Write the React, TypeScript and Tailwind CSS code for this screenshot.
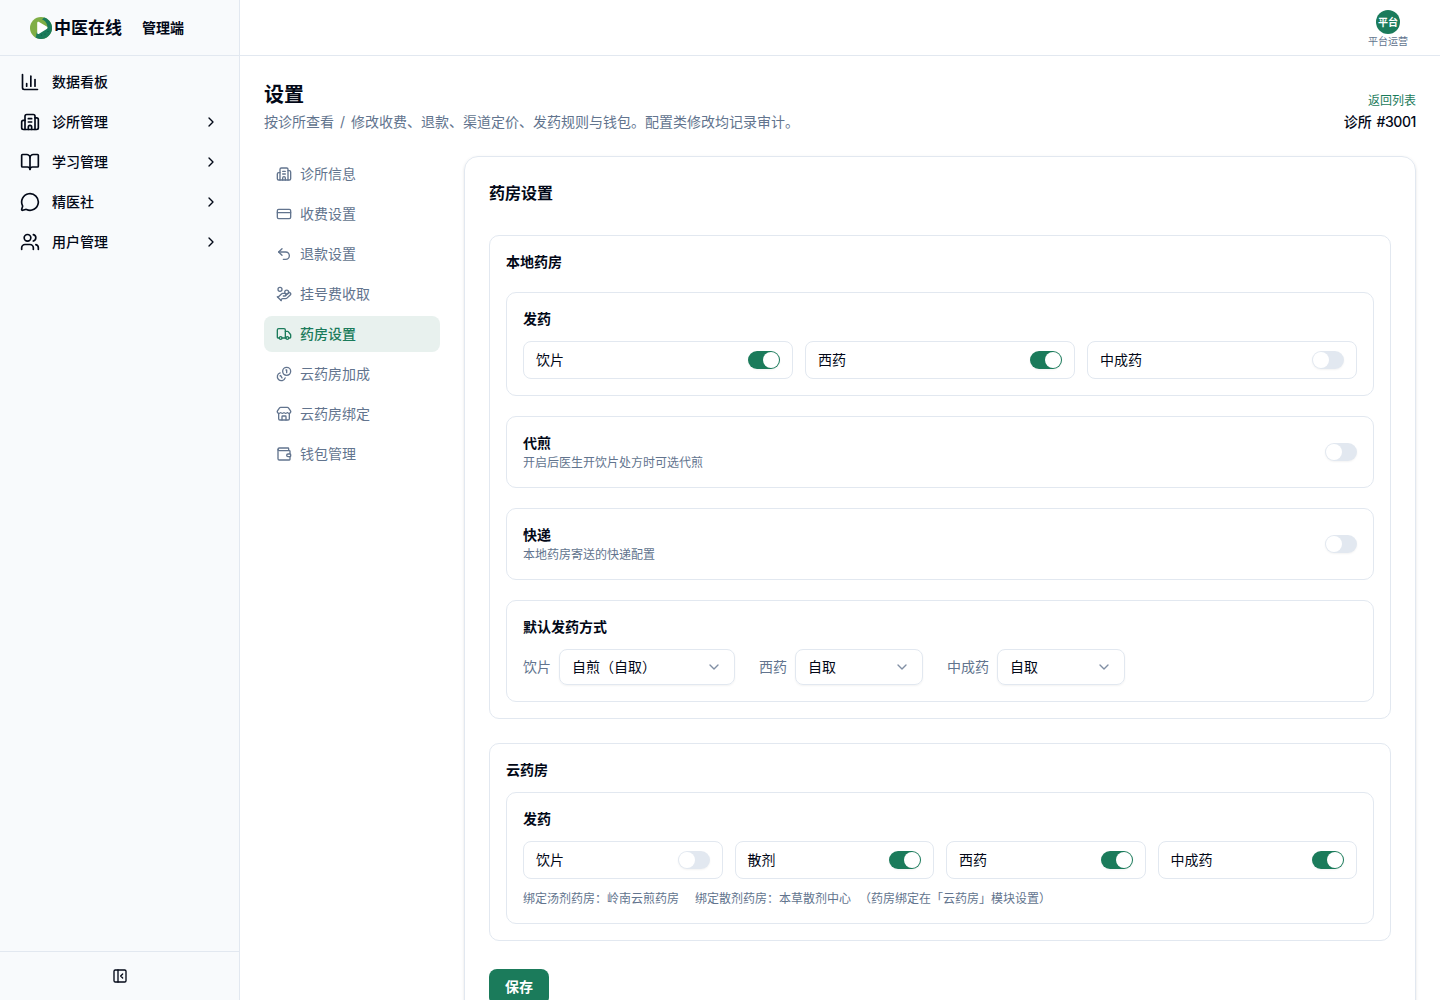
import { useState } from 'react';
import {
  BookOpen,
  Building2,
  ChartColumn,
  ChevronDown,
  ChevronRight,
  CreditCard,
  HandCoins,
  MessageCircle,
  PanelLeftClose,
  Store,
  Truck,
  Undo2,
  Users,
  Wallet,
} from 'lucide-react';
import clsx from 'clsx';

const MENU = [
  { label: '数据看板', icon: ChartColumn, expandable: false },
  { label: '诊所管理', icon: Building2, expandable: true },
  { label: '学习管理', icon: BookOpen, expandable: true },
  { label: '精医社', icon: MessageCircle, expandable: true },
  { label: '用户管理', icon: Users, expandable: true },
];

const TABS = [
  { label: '诊所信息', icon: Building2 },
  { label: '收费设置', icon: CreditCard },
  { label: '退款设置', icon: Undo2 },
  { label: '挂号费收取', icon: HandCoins },
  { label: '药房设置', icon: Truck },
  { label: '云药房加成', icon: CoinsIcon },
  { label: '云药房绑定', icon: Store },
  { label: '钱包管理', icon: Wallet },
];

// 双硬币图标，大硬币在右上
function CoinsIcon({ className }: { className?: string }) {
  return (
    <svg
      className={className}
      viewBox="0 0 24 24"
      fill="none"
      stroke="currentColor"
      strokeWidth="2"
      strokeLinecap="round"
      strokeLinejoin="round"
      aria-hidden="true"
    >
      <path d="M13.744 17.736a6 6 0 1 1-7.48-7.48" />
      <path d="M15 6h1v4" />
      <path d="m6.134 14.768.866-.5 2 3.464" />
      <circle cx="16" cy="8" r="6" />
    </svg>
  );
}

function Logo() {
  return (
    <div className="flex items-center gap-[3px]">
      <svg width="22" height="22" viewBox="0 0 22 22" aria-hidden="true">
        <circle cx="11" cy="11" r="11" fill="#7fae45" />
        <path d="M14 .4A11 11 0 1 1 5.500 20.500C6.500 19.500 6 17 7 15L17.500 11C17.500 7 15.500 3.500 12 2.500Z" fill="#1b7b5b" />
        <path d="M7.200 6c0-1 1-1.600 1.900-1.100l7.600 4.600c1 .6 1 1.900 0 2.500l-7.600 4.800c-.9.500-1.900-.1-1.900-1.100z" fill="#fff" />
        <circle cx="11.500" cy="18" r=".6" fill="#0d5a40" />
        <circle cx="15" cy="17" r=".6" fill="#0d5a40" />
        <circle cx="18" cy="14.500" r=".6" fill="#0d5a40" />
      </svg>
      <span className="-ml-px text-[17px] leading-6 font-semibold">中医在线</span>
    </div>
  );
}

function Switch({ defaultOn = false }: { defaultOn?: boolean }) {
  const [on, setOn] = useState(defaultOn);

  return (
    <button
      type="button"
      role="switch"
      aria-checked={on}
      onClick={() => setOn(!on)}
      className={clsx(
        'inline-flex h-[18.4px] w-8 shrink-0 items-center rounded-full border border-transparent shadow-xs',
        on ? 'bg-[#1b7b5b]' : 'bg-slate-200'
      )}
    >
      <span className={clsx('block size-4 rounded-full bg-white', on && 'translate-x-[14px]')} />
    </button>
  );
}

function SwitchBox({ label, on }: { label: string; on?: boolean }) {
  return (
    <div className="flex h-[38px] items-center justify-between rounded-lg border border-slate-200 px-3">
      <span>{label}</span>
      <Switch defaultOn={on} />
    </div>
  );
}

function SwitchPanel({ title, desc }: { title: string; desc: string }) {
  return (
    <div className="flex items-center justify-between rounded-[10px] border border-slate-200 p-4">
      <div>
        <h4 className="font-semibold">{title}</h4>
        <p className="mt-0.5 text-xs text-slate-500">{desc}</p>
      </div>
      <Switch />
    </div>
  );
}

function SelectField({ label, value, wide }: { label: string; value: string; wide?: boolean }) {
  return (
    <div className="flex items-center gap-2">
      <span className="text-slate-500">{label}</span>
      <button
        type="button"
        className={clsx(
          'flex h-9 items-center justify-between rounded-lg border border-slate-200 px-3 shadow-xs',
          wide ? 'w-44' : 'w-32'
        )}
      >
        {value}
        <ChevronDown className="size-4 text-slate-500 opacity-80" />
      </button>
    </div>
  );
}

function Sidebar() {
  return (
    <aside className="flex w-60 shrink-0 flex-col border-r border-slate-200 bg-slate-50">
      <div className="flex h-14 items-center gap-5 border-b border-slate-200 pl-[30px]">
        <Logo />
        <span className="font-semibold">管理端</span>
      </div>

      <nav className="flex flex-1 flex-col gap-1 px-2 pt-2">
        {MENU.map(({ label, icon: Icon, expandable }) => (
          <a key={label} href="#" className="flex h-9 items-center gap-3 px-3 font-medium">
            <Icon className="size-5" />
            <span className="flex-1">{label}</span>
            {expandable && <ChevronRight className="size-4" />}
          </a>
        ))}
      </nav>

      <div className="flex h-[49px] items-center justify-center border-t border-slate-200">
        <PanelLeftClose className="size-4" />
      </div>
    </aside>
  );
}

export default function App() {
  const [tab, setTab] = useState('药房设置');

  return (
    <div className="flex h-screen overflow-hidden bg-white font-[Inter,'Noto_Sans_CJK_SC',sans-serif] text-sm text-[#020817]">
      <Sidebar />

      <div className="flex min-w-0 flex-1 flex-col">
        <header className="flex h-14 shrink-0 items-center justify-end border-b border-slate-200 pr-8">
          <div className="flex flex-col items-center pt-[3px]">
            <span className="flex size-6 items-center justify-center rounded-full bg-[#1b7b5b] text-[10px] font-semibold text-white">
              平台
            </span>
            <span className="text-[10px] leading-[14px] text-slate-500">平台运营</span>
          </div>
        </header>

        <main className="min-h-0 flex-1 overflow-hidden p-6">
          <div className="flex items-end justify-between">
            <div>
              <h1 className="pt-px text-xl leading-7 font-semibold">设置</h1>
              <p className="mt-[3px] text-slate-500 [word-spacing:2px]">
                按诊所查看 / 修改收费、退款、渠道定价、发药规则与钱包。配置类修改均记录审计。
              </p>
            </div>
            <div className="flex flex-col items-end gap-[3px]">
              <a href="#" className="text-xs text-[#1b7b5b]">返回列表</a>
              <span className="font-medium [word-spacing:1px]">
                诊所 <span className="tracking-[-0.4px]">#3001</span>
              </span>
            </div>
          </div>

          <div className="mt-6 flex items-start gap-6">
            <nav className="flex w-44 shrink-0 flex-col gap-1">
              {TABS.map(({ label, icon: Icon }) => (
                <button
                  key={label}
                  type="button"
                  onClick={() => setTab(label)}
                  className={clsx(
                    'flex h-9 items-center gap-2 rounded-lg px-3',
                    tab === label ? 'bg-[#e8f1ee] font-medium text-[#1b7b5b]' : 'text-slate-500'
                  )}
                >
                  <Icon className="size-4" />
                  {label}
                </button>
              ))}
            </nav>

            <section className="min-w-0 flex-1 rounded-[14px] border border-slate-200 p-6 shadow-sm">
              <h2 className="text-base font-semibold">药房设置</h2>

              {/* 本地药房 */}
              <div className="mt-[30px] flex flex-col gap-5 rounded-[10px] border border-slate-200 p-4">
                <h3 className="font-semibold">本地药房</h3>
                <div className="rounded-[10px] border border-slate-200 p-4">
                  <h4 className="font-semibold">发药</h4>
                  <div className="mt-3 grid grid-cols-3 gap-3">
                    <SwitchBox label="饮片" on />
                    <SwitchBox label="西药" on />
                    <SwitchBox label="中成药" />
                  </div>
                </div>
                <SwitchPanel title="代煎" desc="开启后医生开饮片处方时可选代煎" />
                <SwitchPanel title="快递" desc="本地药房寄送的快递配置" />
                <div className="rounded-[10px] border border-slate-200 p-4">
                  <h4 className="font-semibold">默认发药方式</h4>
                  <div className="mt-3 flex gap-6">
                    <SelectField label="饮片" value="自煎（自取）" wide />
                    <SelectField label="西药" value="自取" />
                    <SelectField label="中成药" value="自取" />
                  </div>
                </div>
              </div>

              {/* 云药房 */}
              <div className="mt-6 rounded-[10px] border border-slate-200 p-4">
                <h3 className="font-semibold">云药房</h3>
                <div className="mt-3 rounded-[10px] border border-slate-200 p-4">
                  <h4 className="font-semibold">发药</h4>
                  <div className="mt-3 grid grid-cols-4 gap-3">
                    <SwitchBox label="饮片" />
                    <SwitchBox label="散剂" on />
                    <SwitchBox label="西药" on />
                    <SwitchBox label="中成药" on />
                  </div>
                  <p className="mt-3 flex text-xs text-slate-500">
                    <span className="mr-4">绑定汤剂药房：岭南云煎药房</span>
                    <span className="mr-2">绑定散剂药房：本草散剂中心</span>
                    <span>（药房绑定在「云药房」模块设置）</span>
                  </p>
                </div>
              </div>

              <button type="button" className="mt-7 h-9 rounded-lg bg-[#1b7b5b] px-4 font-semibold text-white">
                保存
              </button>
            </section>
          </div>
        </main>
      </div>
    </div>
  );
}
